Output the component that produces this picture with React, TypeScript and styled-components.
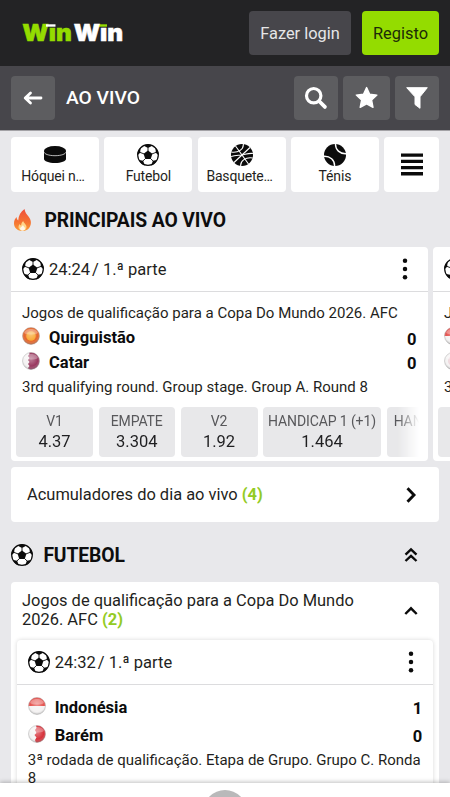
import React from "react";
import styled, { createGlobalStyle, css } from "styled-components";

const GlobalStyle = createGlobalStyle`
  *, *::before, *::after { box-sizing: border-box; }
  body { margin: 0; background: #e8e8eb; }
  button { font: inherit; border: 0; padding: 0; margin: 0; color: inherit; }
  svg { display: block; flex: none; }
`;

const Screen = styled.div`
  position: relative;
  width: 450px;
  height: 797px;
  overflow: hidden;
  background: #e8e8eb;
  color: #1f1f21;
  font-family: Roboto, "Liberation Sans", sans-serif;
  font-size: 16px;
`;

const TopBar = styled.header`
  display: flex;
  align-items: center;
  height: 66px;
  padding: 0 11px 0 22px;
  background: #232325;
`;

const AuthButton = styled.button<{ $primary?: boolean }>`
  width: ${(p) => (p.$primary ? 77 : 102)}px;
  height: 44px;
  border-radius: 4px;
  font-size: 16.4px;
  white-space: nowrap;
  color: ${(p) => (p.$primary ? "#1c2b08" : "#e6e6e8")};
  background: ${(p) => (p.$primary ? "#94dc00" : "#47464b")};
  margin-left: ${(p) => (p.$primary ? "11px" : "auto")};
`;

const SubBar = styled.nav`
  display: flex;
  align-items: center;
  gap: 5px;
  height: 65px;
  padding: 0 11px;
  background: #47464b;
  border-bottom: 1px solid #a3a2a6;
`;

const SquareButton = styled.button<{ $wide?: boolean }>`
  display: grid;
  place-items: center;
  width: ${(p) => (p.$wide ? 47 : 44)}px;
  height: 44px;
  border-radius: 4px;
  color: #fff;
  background: #5d5d60;
`;

const BarTitle = styled.h1`
  flex: 1;
  margin: 0 0 1px 6px;
  font-size: 19.2px;
  font-weight: 500;
  color: #fff;
`;

const Sports = styled.div`
  display: grid;
  grid-template-columns: repeat(4, 88px) 55px;
  gap: 5.3px;
  padding: 6px 11px 0;
`;

const SportTab = styled.button`
  display: flex;
  flex-direction: column;
  align-items: center;
  justify-content: center;
  gap: 1px;
  height: 55px;
  border-radius: 4px;
  background: #fff;
  font-size: 14px;
  line-height: 17px;
  letter-spacing: -0.18px;
`;

const SportName = styled.span<{ $clipped: boolean }>`
  margin-top: 1px;
  padding-right: ${(p) => (p.$clipped ? 4 : 0)}px;
`;

const SectionHead = styled.div<{ $height: number; $top?: number }>`
  display: flex;
  align-items: center;
  height: ${(p) => p.$height}px;
  padding: ${(p) => p.$top ?? 0}px 31px 0 11px;
`;

const SectionTitle = styled.h2`
  flex: 1;
  margin: 1px 0 0 10.4px;
  font-size: 19.3px;
  font-weight: 700;
  letter-spacing: -0.1px;
  color: #0d0d0e;
`;

const Carousel = styled.div`
  display: flex;
  gap: 5.5px;
  height: 214px;
  padding-left: 11px;
  overflow: hidden;
`;

const MatchCard = styled.article<{ $inner?: boolean }>`
  flex: none;
  width: 416.5px;
  overflow: hidden;
  border-radius: 4px;
  background: #fff;
  ${(p) =>
    p.$inner &&
    css`
      height: 200px;
      margin: 0 auto;
      box-shadow: 0 0 4px rgba(0, 0, 0, 0.16);
    `}
`;

const MatchHead = styled.div`
  display: flex;
  align-items: center;
  height: 45px;
  padding: 0 19.2px 0 11px;
  border-bottom: 1px solid #dcdcde;
`;

const Clock = styled.span`
  flex: 1;
  display: flex;
  gap: 2px;
  margin-left: 5px;
  font-size: 16.5px;
  white-space: pre;
`;

const MatchBody = styled.div<{ $top: number }>`
  padding: ${(p) => p.$top}px 11px 0;
`;

const Note = styled.p<{ $line: number; $top?: number }>`
  margin: 0 -4px 0 0;
  padding-top: ${(p) => p.$top ?? 0}px;
  font-size: 15px;
  line-height: ${(p) => p.$line}px;
`;

const TeamRow = styled.div<{ $height: number }>`
  display: flex;
  align-items: center;
  height: ${(p) => p.$height}px;
  font-size: 16.5px;
  font-weight: 700;
  color: #0c0c0d;

  svg {
    margin-bottom: 3px;
  }
`;

const TeamName = styled.span`
  flex: 1;
  margin-left: 9px;
`;

const Score = styled.span`
  padding-top: 3px;
`;

const OddsRow = styled.div`
  display: flex;
  gap: 5.5px;
  margin: 4px 5px 0 5px;
  overflow: hidden;
  mask-image: linear-gradient(to right, #000 calc(100% - 25px), transparent calc(100% - 4px));
`;

const Odd = styled.button<{ $width: number }>`
  flex: none;
  width: ${(p) => p.$width}px;
  height: 50px;
  border-radius: 4px;
  background: #e8e8ea;
  white-space: nowrap;
`;

const OddLabel = styled.div`
  font-size: 14px;
  line-height: 17px;
  letter-spacing: -0.12px;
  color: #58585b;
`;

const OddValue = styled.div`
  margin-top: 2px;
  font-size: 16.5px;
  line-height: 20px;
`;

const LinkRow = styled.a`
  display: flex;
  align-items: center;
  justify-content: space-between;
  height: 55px;
  margin: 6px 11px 0;
  padding: 0 20px 0 16px;
  border-radius: 4px;
  background: #fff;
  font-size: 16.45px;
`;

const Count = styled.b`
  font-weight: 700;
  color: #93cb24;
`;

const League = styled.section`
  margin: 0 11px;
  height: 240px;
  border-radius: 4px;
  background: #fff;
`;

const LeagueHead = styled.div`
  display: flex;
  align-items: center;
  justify-content: space-between;
  height: 58px;
  padding: 0 20px 1px 11px;
  font-size: 16.45px;
  line-height: 18.5px;
`;

const LeagueName = styled.div`
  width: 350px;
`;

const BottomBar = styled.footer`
  position: absolute;
  inset: auto 0 0 0;
  height: 14px;
  overflow: hidden;
  background: #fff;
  box-shadow: 0 -1px 4px rgba(0, 0, 0, 0.25);
`;

const Knob = styled.div`
  width: 44px;
  height: 44px;
  margin: 6.5px auto 0;
  border-radius: 50%;
  background: #b9b9ba;
`;

const Logo = () => (
  <svg width="103" height="24" viewBox="0 0 103 24" fontFamily="Inter, sans-serif" fontWeight="900" fontSize="23.5">
    <g stroke="#94dc00" strokeWidth=".5" fill="#94dc00">
      <text x="0.3" y="20.2" textLength="49.5" lengthAdjust="spacingAndGlyphs">Wın</text>
      <rect x="75.5" y="3.3" width="9.5" height="2.4" stroke="none" />
    </g>
    <g stroke="#fff" strokeWidth=".5" fill="#fff">
      <text x="51.7" y="20.2" textLength="49.5" lengthAdjust="spacingAndGlyphs">Wın</text>
      <rect x="24" y="3.3" width="9.5" height="2.4" stroke="none" />
    </g>
  </svg>
);

const BackIcon = () => (
  <svg width="20" height="16" viewBox="0 0 20 16" fill="none" stroke="#fff" strokeWidth="2.8" strokeLinecap="round" strokeLinejoin="round">
    <path d="M18 8H2.5M7.5 3 2.2 8l5.3 5" />
  </svg>
);

const SearchIcon = () => (
  <svg width="24" height="24" viewBox="0 0 24 24" fill="none" stroke="#fff" strokeLinecap="round">
    <circle cx="9.7" cy="9.7" r="7.2" strokeWidth="3.2" />
    <path d="m15.5 15.5 5.4 5.4" strokeWidth="3.8" />
  </svg>
);

const StarIcon = () => (
  <svg width="24" height="24" viewBox="0 0 24 24" fill="#fff" stroke="#fff" strokeWidth="1.4" strokeLinejoin="round">
    <path d="m11.6 1.6 3.1 6.6 7.2.9-5.3 5 1.4 7.2-6.4-3.5-6.4 3.5 1.4-7.2-5.3-5 7.2-.9z" />
  </svg>
);

const FilterIcon = () => (
  <svg width="24" height="24" viewBox="0 0 24 24" fill="#fff" stroke="#fff" strokeLinejoin="round">
    <path d="M1.7 1.7h20.6L15 10.8v11.5l-5-3.8v-7.7z" />
  </svg>
);

const PuckIcon = () => (
  <svg width="24" height="22" viewBox="0 0 24 22">
    <path d="M1 7v8c0 2.3 4.8 4 11 4s11-1.7 11-4V7z" fill="#0b0b0b" />
    <ellipse cx="12" cy="6.6" rx="11" ry="4.5" fill="#0b0b0b" />
    <path d="M1 7.8c0 2.2 4.8 3.9 11 3.900s11-1.7 11-3.9" fill="none" stroke="#fff" strokeWidth=".7" />
  </svg>
);

const FootballIcon = () => (
  <svg width="22" height="22" viewBox="0 0 22 22">
    <circle cx="11" cy="11" r="10.3" fill="#fff" stroke="#0b0b0b" strokeWidth="1.2" />
    <g fill="#0b0b0b">
      <path d="m11 6.6 4.4 3.2-1.7 5.1H8.3L6.6 9.8z" />
      <path d="M6.3 1.6 11 4.1l4.7-2.5C12.9.2 9.1.2 6.3 1.6z" />
      <path d="m18.5 3.7.3 5 3 2.8c.1-3.2-1.1-5.9-3.3-7.8zM3.5 3.7l-.3 5-3 2.8c-.1-3.2 1.1-5.9 3.3-7.8z" />
      <path d="m19.9 15.9-4 .9-1.8 4.6c2.6-.8 4.7-2.7 5.8-5.5zM2.1 15.9l4 .9 1.8 4.6c-2.6-.8-4.7-2.7-5.8-5.5z" />
    </g>
    <path d="M11 7V3.5M15 9.900l4-1.5M13.5 14.5l2.8 2.7M8.5 14.5l-2.8 2.7M7 9.900 3 8.4" stroke="#0b0b0b" strokeWidth=".9" />
  </svg>
);

const BasketballIcon = () => (
  <svg width="22" height="22" viewBox="0 0 22 22">
    <circle cx="11" cy="11" r="11" fill="#0b0b0b" />
    <g fill="none" stroke="#fff" strokeWidth="1.1">
      <path d="M3 18.5 19 3.5M4.5 2l13 18" />
      <path d="M12.3-.2c.6 5.5-5 9.3-12 8.2M9.7 22.2c-.6-5.5 5-9.3 12-8.2" />
      <path d="M.1 12.5c4-1.5 7.6-1 10.9-1.5s6.5-2 10.9-1.5" />
    </g>
  </svg>
);

const TennisIcon = () => (
  <svg width="22" height="22" viewBox="0 0 22 22">
    <circle cx="11" cy="11" r="11" fill="#0b0b0b" />
    <path d="M11.5-.2c-.2 6 4.3 10.2 10.7 9.900M-.2 12.2c6.3-.3 11 4 10.800 10" fill="none" stroke="#fff" strokeWidth="1.4" />
  </svg>
);

const ListIcon = () => (
  <svg width="22" height="23" viewBox="0 0 22 23" fill="#0b0b0b">
    <path d="M0 .5h22v3.300H0zM0 6.700h22V10H0zM0 12.900h22v3.300H0zM0 19.100h22v3.300H0z" />
  </svg>
);

const FlameIcon = () => (
  <svg width="23" height="24" viewBox="0 0 23 24">
    <defs>
      <linearGradient id="flame" x1="0" y1="0" x2="0" y2="1">
        <stop offset="0" stopColor="#ef4f3c" />
        <stop offset=".6" stopColor="#f57331" />
        <stop offset="1" stopColor="#fb9a35" />
      </linearGradient>
    </defs>
    <path d="M13.500 1c.6 3.600 2 5 4 7.500 1.800 2.300 2.800 4.500 2.300 7.500-.8 4.600-4 7-8.300 7C6.500 23 3 19.800 3 15.500c0-2.800 1-4.700 2.500-6.500.2 1.600.6 2.600 1.700 3.400C7.500 7.500 9.800 3.500 13.500 1z" fill="url(#flame)" />
    <path d="M12.200 13c.3 2 3.300 3.300 3.300 6 0 2.300-1.700 3.600-4 3.600s-4-1.500-4-3.600c0-1.200.4-2.100 1.100-3 .4.900.8 1.300 1.500 1.600.1-2 .8-3.400 2.100-4.600z" fill="#ffd489" />
    <path d="M12 17c.2 1.500 2 2 2 3.700 0 1.300-1.100 2-2.500 2S9 21.800 9 20.600c0-1.500 2.400-1.800 3-3.600z" fill="#fff6e8" />
  </svg>
);

const MoreIcon = () => (
  <svg width="6" height="22" viewBox="0 0 6 22" fill="#0b0b0b">
    <circle cx="3" cy="2.7" r="2.25" />
    <circle cx="3" cy="11" r="2.25" />
    <circle cx="3" cy="19.3" r="2.25" />
  </svg>
);

const Chevron = ({ kind }: { kind: "right" | "up" | "double" }) => {
  const size = { right: [16, 18], up: [16, 12], double: [16, 16] }[kind];
  const path = {
    right: "m4.5 2.3 6.500 6.700-6.500 6.700",
    up: "m2.300 9 5.700-5.700L13.700 9",
    double: "m2.500 7.700 5.500-5.200 5.500 5.200M2.500 14 8 8.800l5.500 5.200",
  }[kind];
  return (
    <svg width={size[0]} height={size[1]} viewBox={`0 0 ${size[0]} ${size[1]}`} fill="none" stroke="#0b0b0b" strokeWidth={kind === "right" ? 2.9 : 2.4}>
      <path d={path} />
    </svg>
  );
};

type Country = "kg" | "qa" | "id" | "bh" | "kp";

const Flag = ({ country, id }: { country: Country; id: string }) => (
  <svg width="18" height="18" viewBox="0 0 18 18">
    <defs>
      <clipPath id={`${id}-clip`}>
        <circle cx="9" cy="9" r="8.5" />
      </clipPath>
      <radialGradient id={`${id}-shade`} cx=".5" cy=".4" r=".62">
        <stop offset="0" stopColor="#fff" stopOpacity=".35" />
        <stop offset=".65" stopColor="#fff" stopOpacity="0" />
        <stop offset="1" stopColor="#444" stopOpacity=".45" />
      </radialGradient>
    </defs>
    <g clipPath={`url(#${id}-clip)`}>
      <rect width="18" height="18" fill="#f5f3f3" />
      {country === "kg" && (
        <>
          <rect width="18" height="18" fill="#e5662b" />
          <circle cx="9" cy="9" r="4.8" fill="#f8a52d" />
        </>
      )}
      {country === "qa" && <path d="M7 0h11v18H7l-1-2 1.500-2L6 12l1.500-2L6 8l1.500-2L6 4l1.500-2z" fill="#99385f" />}
      {country === "bh" && <path d="M8 0h10v18H8l-1-3 1.500-2.500L6.500 10l2-2-1.500-3 1.500-2z" fill="#d7323b" />}
      {country === "id" && <rect width="18" height="9" fill="#e5534f" />}
      {country === "kp" && <circle cx="9" cy="9" r="5" fill="#eed5da" />}
      <path d="M2 6C3 .5 15 .5 16 6c-3 2-11 2-14 0z" fill="#fff" opacity=".3" />
    </g>
    <circle cx="9" cy="9" r="8.5" fill={`url(#${id}-shade)`} stroke="#aaa" strokeOpacity=".55" strokeWidth=".8" />
  </svg>
);

const Team = ({ name, score, country, height, id }: { name: string; score: number; country: Country; height: number; id: string }) => (
  <TeamRow $height={height}>
    <Flag country={country} id={id} />
    <TeamName>{name}</TeamName>
    <Score>{score}</Score>
  </TeamRow>
);

const MatchHeader = ({ time }: { time: string }) => (
  <MatchHead>
    <FootballIcon />
    <Clock>
      <span>{time}</span>
      <span>/ 1.ª parte</span>
    </Clock>
    <MoreIcon />
  </MatchHead>
);

const sports = [
  { name: "Hóquei n…", icon: <PuckIcon /> },
  { name: "Futebol", icon: <FootballIcon /> },
  { name: "Basquete…", icon: <BasketballIcon /> },
  { name: "Ténis", icon: <TennisIcon /> },
];

const odds = [
  { label: "V1", value: "4.37", width: 77 },
  { label: "EMPATE", value: "3.304", width: 76.5 },
  { label: "V2", value: "1.92", width: 77 },
  { label: "HANDICAP 1 (+1)", value: "1.464", width: 118 },
  { label: "HANDICAP 2 (-1)", value: "", width: 118 },
];

const TopMatch = ({ id, home, away }: { id: string; home: [string, Country]; away: [string, Country] }) => (
  <MatchCard>
    <MatchHeader time="24:24" />
    <MatchBody $top={12}>
      <Note $line={18}>Jogos de qualificação para a Copa Do Mundo 2026. AFC</Note>
      <Team name={home[0]} country={home[1]} score={0} height={31} id={`${id}-home`} />
      <Team name={away[0]} country={away[1]} score={0} height={18} id={`${id}-away`} />
      <Note $line={32}>3rd qualifying round. Group stage. Group A. Round 8</Note>
    </MatchBody>
    <OddsRow>
      {odds.map((o) => (
        <Odd key={o.label} $width={o.width}>
          <OddLabel>{o.label}</OddLabel>
          <OddValue>{o.value || "\u00a0"}</OddValue>
        </Odd>
      ))}
    </OddsRow>
  </MatchCard>
);

export default function App() {
  return (
    <Screen>
      <GlobalStyle />
      <TopBar>
        <Logo />
        <AuthButton>Fazer login</AuthButton>
        <AuthButton $primary>Registo</AuthButton>
      </TopBar>
      <SubBar>
        <SquareButton aria-label="Voltar"><BackIcon /></SquareButton>
        <BarTitle>AO VIVO</BarTitle>
        <SquareButton aria-label="Pesquisar"><SearchIcon /></SquareButton>
        <SquareButton aria-label="Favoritos" $wide><StarIcon /></SquareButton>
        <SquareButton aria-label="Filtrar"><FilterIcon /></SquareButton>
      </SubBar>
      <Sports>
        {sports.map((s) => (
          <SportTab key={s.name}>
            {s.icon}
            <SportName $clipped={s.name.endsWith("…")}>{s.name}</SportName>
          </SportTab>
        ))}
        <SportTab aria-label="Todos"><ListIcon /></SportTab>
      </Sports>
      <SectionHead $height={55}>
        <FlameIcon />
        <SectionTitle>PRINCIPAIS AO VIVO</SectionTitle>
      </SectionHead>
      <Carousel>
        <TopMatch id="first" home={["Quirguistão", "kg"]} away={["Catar", "qa"]} />
        <TopMatch id="next" home={["Indonésia", "id"]} away={["Coreia", "kp"]} />
      </Carousel>
      <LinkRow>
        <span>Acumuladores do dia ao vivo <Count>(4)</Count></span>
        <Chevron kind="right" />
      </LinkRow>
      <SectionHead $height={60} $top={5}>
        <FootballIcon />
        <SectionTitle>FUTEBOL</SectionTitle>
        <Chevron kind="double" />
      </SectionHead>
      <League>
        <LeagueHead>
          <LeagueName>Jogos de qualificação para a Copa Do Mundo 2026. AFC <Count>(2)</Count></LeagueName>
          <Chevron kind="up" />
        </LeagueHead>
        <MatchCard $inner>
          <MatchHeader time="24:32" />
          <MatchBody $top={8}>
            <Team name="Indonésia" country="id" score={1} height={28} id="league-home" />
            <Team name="Barém" country="bh" score={0} height={28} id="league-away" />
            <Note $line={17.5} $top={3}>3ª rodada de qualificação. Etapa de Grupo. Grupo C. Ronda 8</Note>
          </MatchBody>
        </MatchCard>
      </League>
      <BottomBar><Knob /></BottomBar>
    </Screen>
  );
}
